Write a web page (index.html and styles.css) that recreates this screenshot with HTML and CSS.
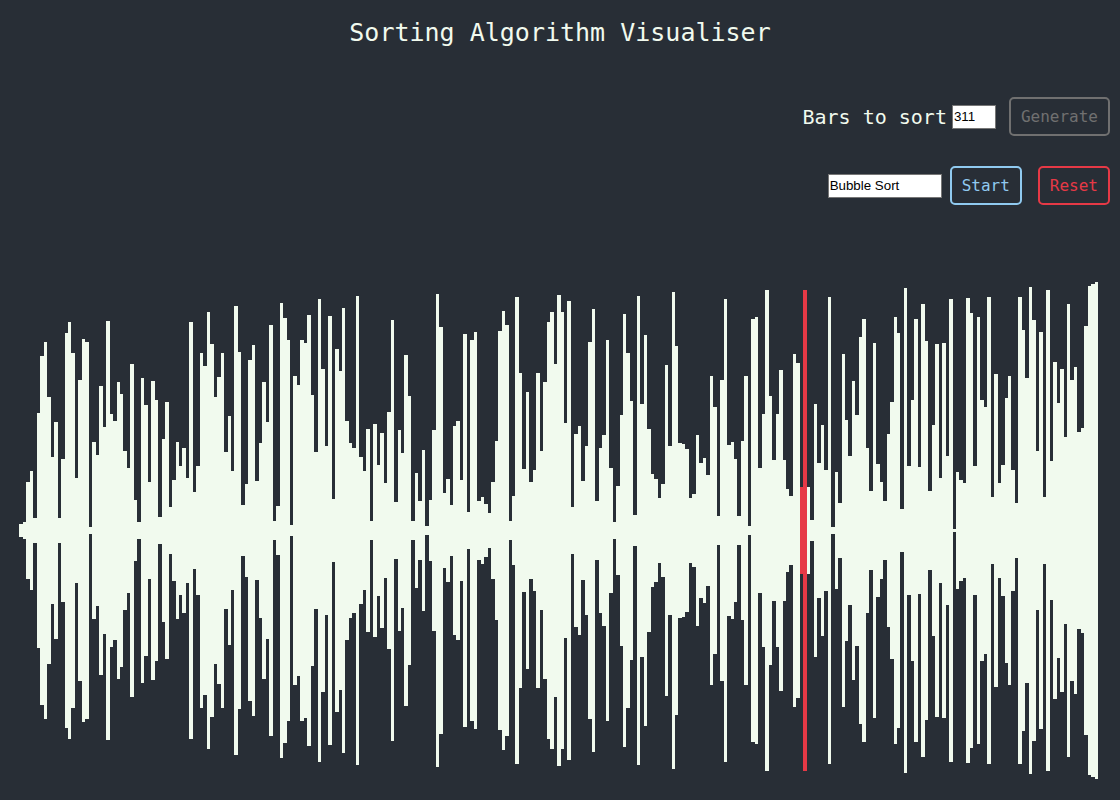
FILE: index.html
```html
<!DOCTYPE html>
<html lang="en">
<head>
<meta charset="utf-8">
<title>Sorting Algorithm Visualiser</title>
<link rel="stylesheet" href="styles.css">
</head>
<body>
<h1 class="title">Sorting Algorithm Visualiser</h1>
<main>
  <div class="controls">
    <div class="row">
      <label class="count-label" for="count">Bars to sort</label>
      <input class="field count" id="count" type="text" inputmode="numeric" value="311">
      <button class="btn btn-generate" type="button" disabled>Generate</button>
    </div>
    <div class="row">
      <select class="field algorithm" aria-label="Algorithm">
        <option>Bubble Sort</option>
      </select>
      <button class="btn btn-start" type="button">Start</button>
      <button class="btn btn-reset" type="button">Reset</button>
    </div>
  </div>
  <div class="bars" id="bars"></div>
</main>
<script src="script.js"></script>
</body>
</html>
```
FILE: styles.css
```css
* {
  box-sizing: border-box;
}

body {
  margin: 0;
  background: #282e36;
  color: #f1faee;
  font-family: "DejaVu Sans Mono", monospace;
}

.title {
  margin: 0;
  padding-top: 18px;
  font-size: 25px;
  font-weight: 400;
  line-height: 30px;
  text-align: center;
}

.controls {
  display: flex;
  flex-direction: column;
  gap: 30px;
  padding: 49px 10px 75px;
}

.row {
  display: flex;
  justify-content: flex-end;
  align-items: center;
}

.count-label {
  margin-right: 5px;
  font-size: 20px;
  line-height: 24px;
}

.field {
  height: 24px;
  margin: 0;
  padding: 0 1px;
  border: 1px solid #767676;
  border-radius: 0;
  background: #fff;
  color: #000;
  font-family: "Liberation Sans", Arial, sans-serif;
  appearance: none;
}

.count {
  width: 44px;
  margin-right: 13px;
}

.algorithm {
  width: 114px;
  margin-right: 8px;
}

.btn {
  padding: 8px 10px;
  border: 2px solid currentColor;
  border-radius: 5px;
  background: transparent;
  font-family: inherit;
  font-size: 16px;
  line-height: 19px;
}

.btn-generate {
  color: #707070;
}

.btn-start {
  margin-right: 16px;
  color: #90caf0;
}

.btn-reset {
  color: #e63946;
}

.bars {
  display: flex;
  align-items: center;
  height: 501px;
  padding: 0 1.945% 0 1.734%;
}

.bar {
  flex: 1 1 0;
  min-width: 0;
  background: #f1faee;
}

.bar-active {
  background: #e63946;
}
```
FILE: script.js
```js
// How far each bar reaches above and below the centre line.
const reach = [
  6, 8, 48, 59, 12, 117, 174, 188, 133, 73,
  108, 12, 71, 197, 208, 177, 52, 150, 191, 188,
  3, 88, 75, 144, 103, 209, 116, 109, 148, 136,
  79, 62, 166, 30, 8, 152, 125, 48, 149, 130,
  13, 91, 128, 23, 50, 88, 64, 82, 52, 208,
  38, 64, 177, 164, 218, 186, 133, 153, 177, 78,
  114, 59, 224, 178, 25, 46, 170, 185, 49, 87,
  148, 108, 205, 9, 24, 227, 212, 190, 5, 154,
  145, 190, 187, 215, 135, 78, 231, 161, 84, 214,
  31, 181, 159, 222, 109, 87, 82, 234, 73, 59,
  101, 9, 106, 65, 97, 47, 118, 210, 28, 100,
  77, 175, 134, 9, 57, 29, 80, 4, 30, 100,
  236, 203, 37, 51, 25, 104, 109, 50, 196, 18,
  190, 198, 29, 33, 26, 17, 48, 89, 199, 219,
  205, 9, 34, 233, 157, 61, 138, 48, 60, 157,
  79, 148, 208, 218, 166, 235, 218, 107, 229, 23,
  96, 104, 49, 84, 188, 221, 29, 82, 95, 190,
  62, 8, 44, 115, 216, 177, 129, 15, 234, 126,
  195, 101, 56, 51, 32, 46, 165, 84, 238, 184,
  87, 86, 81, 32, 36, 95, 67, 72, 55, 154,
  123, 14, 150, 231, 85, 88, 71, 14, 89, 154,
  4, 211, 213, 62, 116, 240, 134, 70, 116, 160,
  70, 41, 34, 176, 167, 43, 240, 43, 10, 126,
  67, 105, 60, 233, 3, 58, 27, 176, 110, 74,
  149, 115, 193, 211, 82, 39, 187, 66, 48, 29,
  96, 128, 213, 197, 21, 242, 64, 130, 211, 63,
  226, 189, 39, 105, 186, 52, 187, 74, 231, 1,
  58, 50, 47, 232, 217, 64, 213, 130, 123, 233,
  33, 156, 47, 65, 132, 154, 60, 27, 233, 200,
  152, 243, 210, 79, 198, 33, 240, 69, 168, 127,
  161, 93, 226, 150, 163, 98, 102, 204, 244, 246,
  248
];

const comparing = [225, 226];

const bars = document.getElementById("bars");

reach.forEach((value, index) => {
  const bar = document.createElement("div");
  bar.className = comparing.includes(index) ? "bar bar-active" : "bar";
  bar.style.height = `${value * 2 + 1}px`;
  bars.append(bar);
});
```
